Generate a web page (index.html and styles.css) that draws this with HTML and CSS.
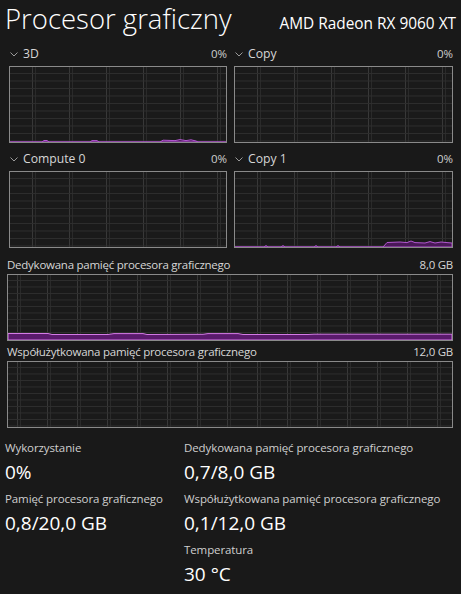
FILE: index.html
```html
<!DOCTYPE html>
<html lang="pl">
<head>
<meta charset="utf-8">
<title>Procesor graficzny</title>
<link rel="stylesheet" href="styles.css">
</head>
<body>
<div class="page">
  <header class="head">
    <h1 class="title">Procesor graficzny</h1>
    <div class="model">AMD Radeon RX 9060 XT</div>
  </header>

  <section class="engines">
    <div class="engine">
      <div class="elabel">
        <svg class="chev" width="8" height="5" viewBox="0 0 8 5"><polyline points="0.5,0.5 4,4 7.5,0.5"/></svg>
        <span class="ename">3D</span><span class="epct">0%</span>
      </div>
      <div class="graph small">
        <svg class="data" viewBox="0 0 216 75" preserveAspectRatio="none">
          <path class="area" d="M0 75 L32 75 L34 73.5 L37 73.5 L39 75 L80 75 L82 73.6 L87 73.6 L89 75 L150 75 L153 73.2 L165 73.6 L170 72.6 L176 73.6 L181 72.8 L186 74 L188 75 L216 75 Z"/>
        </svg>
      </div>
    </div>
    <div class="engine">
      <div class="elabel">
        <svg class="chev" width="8" height="5" viewBox="0 0 8 5"><polyline points="0.5,0.5 4,4 7.5,0.5"/></svg>
        <span class="ename">Copy</span><span class="epct">0%</span>
      </div>
      <div class="graph small"></div>
    </div>
    <div class="engine">
      <div class="elabel">
        <svg class="chev" width="8" height="5" viewBox="0 0 8 5"><polyline points="0.5,0.5 4,4 7.5,0.5"/></svg>
        <span class="ename">Compute 0</span><span class="epct">0%</span>
      </div>
      <div class="graph small"></div>
    </div>
    <div class="engine">
      <div class="elabel">
        <svg class="chev" width="8" height="5" viewBox="0 0 8 5"><polyline points="0.5,0.5 4,4 7.5,0.5"/></svg>
        <span class="ename">Copy 1</span><span class="epct">0%</span>
      </div>
      <div class="graph small">
        <svg class="data" viewBox="0 0 217 75" preserveAspectRatio="none">
          <path class="area" d="M0 75 L29 75 L31 73.6 L33 75 L46 75 L48 73.6 L50 75 L79 75 L81 73.6 L83 75 L101 75 L103 73.6 L105 75 L148 75 L152 70.5 L165 70 L172 70.6 L176 69 L180 70.6 L190 71 L195 69.6 L200 71 L206 70 L212 70.6 L217 71 L217 75 Z"/>
        </svg>
      </div>
    </div>
  </section>

  <section class="mem">
    <div class="mlabel"><span>Dedykowana pamięć procesora graficznego</span><span>8,0 GB</span></div>
    <div class="graph big">
      <svg class="data" viewBox="0 0 444 65" preserveAspectRatio="none">
        <path class="band" d="M0 58.5 L40 58.5 L44 59.5 L100 59.5 L106 58.6 L135 58.6 L139 59.5 L195 59.3 L200 58.6 L230 58.6 L235 59.5 L300 59.5 L306 59.2 L444 59.2 L444 65 L0 65 Z"/>
      </svg>
    </div>
    <div class="mlabel"><span>Współużytkowana pamięć procesora graficznego</span><span>12,0 GB</span></div>
    <div class="graph big"></div>
  </section>

  <section class="stats">
    <div class="col">
      <div class="stat"><div class="slabel">Wykorzystanie</div><div class="sval">0%</div></div>
      <div class="stat"><div class="slabel">Pamięć procesora graficznego</div><div class="sval">0,8/20,0 GB</div></div>
    </div>
    <div class="col">
      <div class="stat"><div class="slabel">Dedykowana pamięć procesora graficznego</div><div class="sval">0,7/8,0 GB</div></div>
      <div class="stat"><div class="slabel">Współużytkowana pamięć procesora graficznego</div><div class="sval">0,1/12,0 GB</div></div>
      <div class="stat"><div class="slabel">Temperatura</div><div class="sval">30 °C</div></div>
    </div>
  </section>
</div>
</body>
</html>
```

FILE: styles.css
```css
* {
  box-sizing: border-box;
  margin: 0;
  padding: 0;
}

html, body {
  background: #191919;
}

body {
  width: 461px;
  height: 594px;
  overflow: hidden;
  color: #ffffff;
  font-family: "Open Sans", "Noto Sans", sans-serif;
}

.page {
  padding: 1px 5px 0 5px;
}

/* header */
.head {
  display: flex;
  justify-content: space-between;
  align-items: baseline;
}

.title {
  font-size: 27.5px;
  font-weight: 300;
  line-height: 36px;
  color: #ffffff;
}

.model {
  font-size: 15.4px;
  font-weight: 400;
  line-height: 20px;
  color: #ffffff;
}

/* engine graphs */
.engines {
  margin: 8px 0 0 4px;
  display: grid;
  grid-template-columns: 218px 219px;
  column-gap: 7px;
  row-gap: 7px;
}

.elabel {
  display: flex;
  align-items: center;
  height: 17px;
  margin-bottom: 4px;
  font-size: 12.2px;
  line-height: 17px;
  color: #d6d6d6;
}

.chev {
  margin: 1px 5px 0 1px;
  flex: none;
}

.chev polyline {
  fill: none;
  stroke: #9a9a9a;
  stroke-width: 1;
}

.epct {
  margin-left: auto;
  font-size: 11.5px;
  color: #cfcfcf;
}

.graph {
  position: relative;
  border: 1px solid #8a8a8a;
  background-color: #1a1a1a;
}

.graph.small {
  height: 77px;
  background-image:
    linear-gradient(to bottom, #2e2e2e 1px, transparent 1px),
    linear-gradient(to right, #383838 1px, transparent 1px),
    linear-gradient(to right, #2a2a2a 1px, transparent 1px);
  background-size: 100% 7.5px, 37px 100%, 37px 100%;
  background-position: 0 6px, 22px 0, 25px 0;
}

.graph.big {
  height: 67px;
  background-image:
    linear-gradient(to bottom, #2e2e2e 1px, transparent 1px),
    linear-gradient(to right, #383838 1px, transparent 1px),
    linear-gradient(to right, #2a2a2a 1px, transparent 1px);
  background-size: 100% 6.5px, 30px 100%, 30px 100%;
  background-position: 0 5px, 9px 0, 12px 0;
}

.data {
  position: absolute;
  left: 0;
  top: 0;
  width: 100%;
  height: 100%;
}

.data .area {
  fill: #4a1858;
  stroke: #b257d0;
  stroke-width: 1;
}

.data .band {
  fill: #5a1a6c;
  stroke: #d47ae6;
  stroke-width: 1;
}

/* memory graphs */
.mem {
  margin: 8px 0 0 2px;
  width: 446px;
}

.mlabel {
  display: flex;
  justify-content: space-between;
  height: 17px;
  margin-bottom: 1px;
  font-size: 11.5px;
  letter-spacing: -0.25px;
  line-height: 17px;
  color: #d6d6d6;
}

.graph.big + .mlabel {
  margin-top: 2px;
}

/* stats */
.stats {
  margin-top: 11px;
  display: grid;
  grid-template-columns: 179px 1fr;
}

.stat {
  margin-bottom: 5.5px;
}

.slabel {
  font-size: 11.5px;
  letter-spacing: -0.1px;
  line-height: 17px;
  color: #cfcfcf;
}

.sval {
  margin-top: 2.5px;
  font-size: 19px;
  line-height: 26px;
  color: #ffffff;
}
```
